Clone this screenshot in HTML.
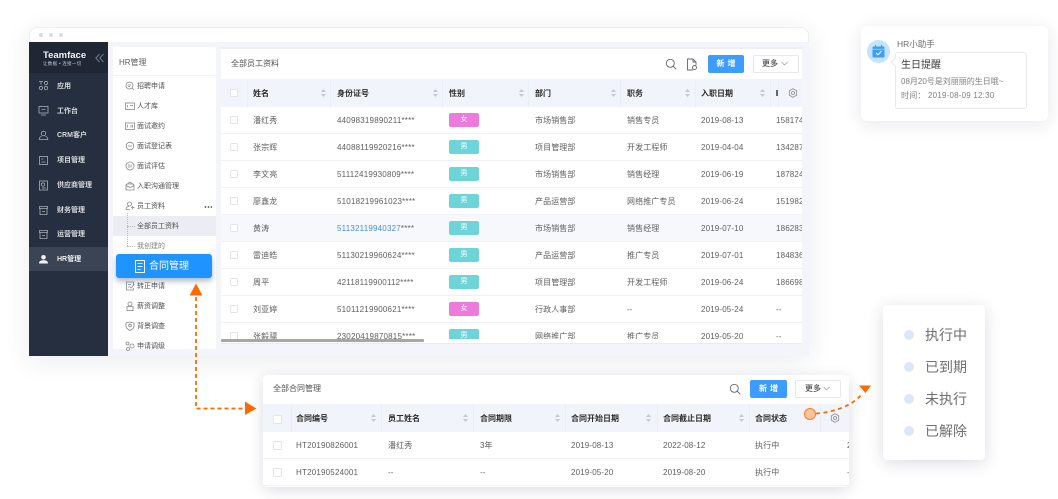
<!DOCTYPE html>
<html lang="zh">
<head>
<meta charset="utf-8">
<title>Teamface HR</title>
<style>
html,body{margin:0;padding:0;background:#fff;}
body{width:1058px;height:499px;position:relative;overflow:hidden;font-family:"Liberation Sans","Noto Sans CJK SC",sans-serif;font-size:8px;color:#5f5f5f;filter:blur(.3px);}
div,span,svg{position:absolute;display:block;box-sizing:border-box;white-space:nowrap;}
b{font-weight:500}
.win{left:29px;top:27px;width:780px;height:329px;background:#f3f5fb;border-radius:8px 8px 0 0;box-shadow:0 5px 26px rgba(30,40,70,.09);}
.titlebar{left:0;top:0;width:780px;height:15px;background:#fff;border-radius:8px 8px 0 0;border:1px solid #eceef2;border-bottom:0;}
.dot{width:4px;height:4px;border-radius:50%;background:#dcdcdc;top:6px;}
.side{left:29px;top:42px;width:79px;height:314px;background:#252f3f;}
.logo{left:29px;top:42px;width:79px;height:31px;background:#1f2735;}
.si{left:57px;font-size:7px;line-height:12px;height:10px;color:#d5d8dc;font-weight:700;}
.sic{left:38px;width:11px;height:11px;fill:none;stroke:#aab0b8;stroke-width:.8;}
.sub{left:113px;top:47px;width:103px;height:302px;background:#fff;}
.mi{left:137px;font-size:7px;line-height:12px;height:10px;color:#4f4f4f;}
.mic{left:125px;width:10px;height:10px;fill:none;stroke:#888;stroke-width:.8;}
.main{left:221px;top:49px;width:581px;height:295px;background:#fff;border-top:0;border-bottom:1px solid #e8ebf1;}
.band{left:221px;top:47px;width:581px;height:2px;background:#eceef4;}
.tbl{left:221px;top:79px;width:581px;height:260px;overflow:hidden;}
.hd{left:0;top:0;width:581px;height:28px;background:#f1f4fb;}
.ht{top:0;line-height:29px;font-size:8px;color:#2c2c2c;font-weight:700;}
.sep{top:0;width:1px;height:28px;background:#e9edf5;}
.r{left:0;width:581px;height:27px;border-bottom:1px solid #eff1f5;background:#fff;}
.r span{top:0;line-height:27px;color:#5f5f5f;letter-spacing:.1px;}
.cb{width:8px;height:8px;border:1px solid #e3e5ea;border-radius:1px;background:#fff;}
.r .cb{left:9px;top:9px;}
.c1{left:32px}.c2{left:116px;letter-spacing:.2px!important}.c4{left:314px}.c5{left:406px}.c6{left:480px;letter-spacing:.15px!important}.c7{left:555px;letter-spacing:.15px!important}
.r .tag{left:228px;top:6px;width:30px;height:14px;border-radius:2px;color:#fff;text-align:center;line-height:14px;font-size:7px;}
.m{background:#6dd5d8}.f{background:#ec7bdc}
.sort{width:5px;height:8px;top:10px;fill:#c4c8d0;}
.btn{background:#3d9cff;color:#fff;border-radius:2px;text-align:center;font-size:8px;font-weight:700;letter-spacing:3px;text-indent:3px;}
.more{background:#fff;border:1px solid #e8e8ea;border-radius:2px;color:#4f4f4f;font-size:8px;font-weight:500;}
.ctr{left:263px;top:375px;width:586px;height:112px;background:#fff;border-radius:4px;box-shadow:0 3px 14px rgba(30,40,70,.16);overflow:hidden;}
.ctr .hd{top:29px;width:586px;}
.ctr .r{width:586px;}
.ctr .r .cb{left:10px;top:9px;}
.ctr .cb{width:9px;height:9px;}
.ctr .ht{top:29px;}
.ctr .sep{top:29px;}
.ctr .sort{top:39px;}
.k1{left:33px;letter-spacing:.2px!important}.k2{left:125px}.k3{left:217px}.k4{left:308px;letter-spacing:.15px!important}.k5{left:400px;letter-spacing:.15px!important}.k6{left:492px}.k7{left:584px}
.st{left:883px;top:305px;width:102px;height:155px;background:#fff;border-radius:4px;box-shadow:0 3px 16px rgba(30,40,70,.16);}
.sd{left:904px;width:10px;height:10px;border-radius:50%;background:#dbe7fd;}
.stx{left:925px;font-size:14px;line-height:20px;height:20px;color:#6f6f6f;}
.pop{left:861px;top:26px;width:187px;height:95px;background:#fff;border-radius:6px;box-shadow:0 3px 18px rgba(30,40,70,.11);}
</style>
</head>
<body>

<div class="win"><div class="titlebar"></div>
<div class="dot" style="left:10px"></div><div class="dot" style="left:20px"></div><div class="dot" style="left:30px"></div></div>

<div class="side"></div>
<div class="logo"></div>
<div style="left:43px;top:50px;font-size:9.500px;line-height:11px;font-weight:700;color:#f2f3f5">Teamface</div>
<div style="left:43px;top:60px;font-size:4.500px;line-height:7px;color:#c6c9ce;letter-spacing:.3px">让数据 • 连接一切</div>
<svg style="left:95px;top:53px;width:9px;height:10px;fill:none;stroke:#8c93a0;stroke-width:.8" viewBox="0 0 9 10"><path d="M4.500 1L.8 5l3.700 4M8.500 1L4.800 5l3.700 4"/></svg>

<div style="left:29px;top:247px;width:79px;height:24px;background:#3a4454"></div>

<svg class="sic" style="top:80px" viewBox="0 0 11 11"><path d="M1 1.500h4M3 1.500v3"/><circle cx="8" cy="3" r="1.700"/><circle cx="3" cy="8" r="1.700"/><circle cx="8" cy="8" r="1.700"/></svg><div class="si" style="top:81px">应用</div>
<svg class="sic" style="top:105px" viewBox="0 0 11 11"><rect x="1" y="1.500" width="9" height="6.500"/><path d="M3 10h5M3.500 4.500h4"/></svg><div class="si" style="top:106px">工作台</div>
<svg class="sic" style="top:130px" viewBox="0 0 11 11"><circle cx="5.500" cy="3.500" r="2.300"/><path d="M1 9.500c.5-2 1.500-3 2.500-3M10 9.500c-.5-2-1.500-3-2.500-3M1 9.500h9"/></svg><div class="si" style="top:130px">CRM客户</div>
<svg class="sic" style="top:155px" viewBox="0 0 11 11"><rect x="1.500" y="1.500" width="8" height="8"/><path d="M3.500 4h2M3.500 7h4"/></svg><div class="si" style="top:155px">项目管理</div>
<svg class="sic" style="top:180px" viewBox="0 0 11 11"><rect x="1.500" y="1" width="8" height="9"/><circle cx="5" cy="4.500" r="1.700"/><path d="M4 8h4"/></svg><div class="si" style="top:180px">供应商管理</div>
<svg class="sic" style="top:205px" viewBox="0 0 11 11"><path d="M1.500 1.500h8v2h-8zM2 3.500v6h7v-6M4 6.500h3"/></svg><div class="si" style="top:205px">财务管理</div>
<svg class="sic" style="top:229px" viewBox="0 0 11 11"><path d="M1.500 1.500h8v2h-8zM2 3.500v6h7v-6M4 6.500h3"/></svg><div class="si" style="top:229px">运营管理</div>
<svg style="left:38px;top:254px;width:11px;height:11px;fill:#f2f3f5" viewBox="0 0 11 11"><circle cx="5.500" cy="3.300" r="2.300"/><path d="M1 9.500c0-2.500 2-3.200 4.500-3.200s4.500.7 4.500 3.200z"/></svg><div class="si" style="top:254px;color:#eef0f2">HR管理</div>

<div class="sub"></div>
<div style="left:113px;top:75px;width:103px;height:1px;background:#f0f1f5"></div>
<div style="left:119px;top:57px;font-size:8px;line-height:12px;color:#5f5f5f">HR管理</div>

<svg class="mic" style="top:81px" viewBox="0 0 10 10"><circle cx="4.500" cy="4.500" r="3.500"/><path d="M7 7l2 2M3 4h3M3 5.500h2"/></svg><div class="mi" style="top:81px">招聘申请</div>
<svg class="mic" style="top:101px" viewBox="0 0 10 10"><rect x=".5" y="2" width="9" height="6.500"/><path d="M2.500 4v2.500M5 4.500h3"/></svg><div class="mi" style="top:101px">人才库</div>
<svg class="mic" style="top:121px" viewBox="0 0 10 10"><rect x=".5" y="2" width="9" height="6.500"/><path d="M2.500 4v2.500M6 4v2.500M7.500 4v2.500"/></svg><div class="mi" style="top:121px">面试邀约</div>
<svg class="mic" style="top:141px" viewBox="0 0 10 10"><circle cx="5" cy="5" r="3.800"/><path d="M3 5h4"/></svg><div class="mi" style="top:141px">面试登记表</div>
<svg class="mic" style="top:161px" viewBox="0 0 10 10"><circle cx="5" cy="5" r="4"/><path d="M4 3v4M6 3.500v3"/></svg><div class="mi" style="top:161px">面试评估</div>
<svg class="mic" style="top:181px" viewBox="0 0 10 10"><path d="M1 4l4-3 4 3v5H1zM1 4.500l4 2 4-2M3 3h4"/></svg><div class="mi" style="top:181px">入职沟通管理</div>
<svg class="mic" style="top:201px" viewBox="0 0 10 10"><circle cx="4.500" cy="3" r="2"/><path d="M1 8.500c0-2 1.500-3.200 3-3.200M1 8.500h4M6 6.500h3.500M7.500 5v3.500"/></svg><div class="mi" style="top:201px">员工资料</div>
<div style="left:204px;top:205.500px;width:8px;height:2px;background-image:radial-gradient(circle,#777 .9px,transparent 1px);background-size:3px 2px"></div>

<div style="left:113px;top:216px;width:103px;height:20px;background:#ecedf2"></div>
<div style="left:127px;top:213px;width:0;height:33px;border-left:1px dotted #bbb"></div>
<div style="left:127px;top:226px;width:8px;height:0;border-top:1px dotted #bbb"></div>
<div style="left:127px;top:246px;width:8px;height:0;border-top:1px dotted #bbb"></div>
<div class="mi" style="top:221px">全部员工资料</div>
<div class="mi" style="top:241px;color:#808080">我创建的</div>

<svg class="mic" style="top:281px" viewBox="0 0 10 10"><path d="M8.500 4V1h-7v8h7V7M3 3.500h3M3 6h1M4.500 5.500l1.500 1.500 3.500-4"/></svg><div class="mi" style="top:281px">转正申请</div>
<svg class="mic" style="top:301px" viewBox="0 0 10 10"><circle cx="5" cy="3" r="2"/><rect x="2" y="5.500" width="6" height="4"/></svg><div class="mi" style="top:301px">薪资调整</div>
<svg class="mic" style="top:321px" viewBox="0 0 10 10"><path d="M1 2l4-1 4 1v3c0 2-2 3.500-4 4.500C3 8.500 1 7 1 5z"/><circle cx="5" cy="4.500" r="1.300"/></svg><div class="mi" style="top:321px">背景调查</div>
<svg class="mic" style="top:341px" viewBox="0 0 10 10"><circle cx="2.500" cy="2.500" r="1.500"/><circle cx="7" cy="5" r="2"/><circle cx="3" cy="8" r="1.500"/></svg><div class="mi" style="top:341px">申请调级</div>

<div class="band"></div>
<div class="main"></div>
<div style="left:231px;top:58px;font-size:8px;line-height:12px;color:#4f4f4f">全部员工资料</div>
<svg style="left:665px;top:58px;width:12px;height:12px;fill:none;stroke:#666;stroke-width:.9" viewBox="0 0 12 12"><circle cx="5.300" cy="5.300" r="4"/><path d="M8.300 8.300l3 3"/></svg>
<svg style="left:686px;top:58px;width:12px;height:13px;fill:none;stroke:#666;stroke-width:.9" viewBox="0 0 12 13"><path d="M7 12H1.500V1H7l3 3v3M7 1v3h3"/><circle cx="8.500" cy="9.500" r="2"/></svg>
<div class="btn" style="left:708px;top:55px;width:36px;height:18px;line-height:18px">新增</div>
<div class="more" style="left:753px;top:55px;width:46px;height:18px;line-height:16px;padding-left:8px">更多</div>
<svg style="left:781px;top:61px;width:7px;height:5px;fill:none;stroke:#999;stroke-width:.7" viewBox="0 0 7 5"><path d="M.5 1l3 3 3-3"/></svg>

<div class="tbl">
 <div class="hd"></div>
 <div class="cb" style="left:9px;top:10px"></div>
 <div class="sep" style="left:26px"></div><div class="sep" style="left:109px"></div><div class="sep" style="left:221px"></div><div class="sep" style="left:307px"></div><div class="sep" style="left:399px"></div><div class="sep" style="left:474px"></div><div class="sep" style="left:549px"></div><div class="sep" style="left:557px"></div>
 <div class="ht" style="left:32px">姓名</div><div class="ht" style="left:116px">身份证号</div><div class="ht" style="left:228px">性别</div><div class="ht" style="left:314px">部门</div><div class="ht" style="left:406px">职务</div><div class="ht" style="left:480px">入职日期</div>
 <svg class="sort" style="left:100px" viewBox="0 0 5 8"><path d="M2.500 0L5 3H0zM2.500 8L0 5h5z"/></svg>
 <svg class="sort" style="left:212px" viewBox="0 0 5 8"><path d="M2.500 0L5 3H0zM2.500 8L0 5h5z"/></svg>
 <svg class="sort" style="left:298px" viewBox="0 0 5 8"><path d="M2.500 0L5 3H0zM2.500 8L0 5h5z"/></svg>
 <svg class="sort" style="left:390px" viewBox="0 0 5 8"><path d="M2.500 0L5 3H0zM2.500 8L0 5h5z"/></svg>
 <svg class="sort" style="left:464px" viewBox="0 0 5 8"><path d="M2.500 0L5 3H0zM2.500 8L0 5h5z"/></svg>
 <svg class="sort" style="left:539px" viewBox="0 0 5 8"><path d="M2.500 0L5 3H0zM2.500 8L0 5h5z"/></svg>
 <div style="left:555px;top:11px;width:2px;height:6px;background:#666"></div>
 <svg style="left:567px;top:9px;width:10px;height:10px;fill:none;stroke:#888;stroke-width:.8" viewBox="0 0 10 10"><path d="M5 .7l3.700 2.150v4.300L5 9.300 1.300 7.150v-4.300z"/><circle cx="5" cy="5" r="1.500"/></svg>

 <div class="r" style="top:28px"><span class="cb"></span><span class="c1">潘红秀</span><span class="c2">44098319890211****</span><span class="tag f">女</span><span class="c4">市场销售部</span><span class="c5">销售专员</span><span class="c6">2019-08-13</span><span class="c7">158174</span></div>
 <div class="r" style="top:55px"><span class="cb"></span><span class="c1">张宗辉</span><span class="c2">44088119920216****</span><span class="tag m">男</span><span class="c4">项目管理部</span><span class="c5">开发工程师</span><span class="c6">2019-04-04</span><span class="c7">134287</span></div>
 <div class="r" style="top:82px"><span class="cb"></span><span class="c1">李文亮</span><span class="c2">51112419930809****</span><span class="tag m">男</span><span class="c4">市场销售部</span><span class="c5">销售经理</span><span class="c6">2019-06-19</span><span class="c7">187824</span></div>
 <div class="r" style="top:109px"><span class="cb"></span><span class="c1">廖鑫龙</span><span class="c2">51018219961023****</span><span class="tag m">男</span><span class="c4">产品运营部</span><span class="c5">网络推广专员</span><span class="c6">2019-06-24</span><span class="c7">151982</span></div>
 <div class="r" style="top:136px;background:#f6f8fc"><span class="cb"></span><span class="c1">黄涛</span><span class="c2" style="color:#4a8ee0">51132119940327<i style="font-style:normal;color:#5f5f5f">****</i></span><span class="tag m">男</span><span class="c4">市场销售部</span><span class="c5">销售经理</span><span class="c6">2019-07-10</span><span class="c7">186283</span></div>
 <div class="r" style="top:163px"><span class="cb"></span><span class="c1">雷迪皓</span><span class="c2">51130219960624****</span><span class="tag m">男</span><span class="c4">产品运营部</span><span class="c5">推广专员</span><span class="c6">2019-07-01</span><span class="c7">184836</span></div>
 <div class="r" style="top:190px"><span class="cb"></span><span class="c1">周平</span><span class="c2">42118119900112****</span><span class="tag m">男</span><span class="c4">项目管理部</span><span class="c5">开发工程师</span><span class="c6">2019-06-24</span><span class="c7">186698</span></div>
 <div class="r" style="top:217px"><span class="cb"></span><span class="c1">刘亚婷</span><span class="c2">51011219900621****</span><span class="tag f">女</span><span class="c4">行政人事部</span><span class="c5">--</span><span class="c6">2019-05-24</span><span class="c7">--</span></div>
 <div class="r" style="top:244px"><span class="cb"></span><span class="c1">张毅骠</span><span class="c2">23020419870815****</span><span class="tag m">男</span><span class="c4">网络推广部</span><span class="c5">推广专员</span><span class="c6">2019-05-20</span><span class="c7">--</span></div>
</div>
<div style="left:221px;top:339px;width:203px;height:3px;background:#a6a6a6;border-radius:1px"></div>

<div style="left:116px;top:254px;width:96px;height:24px;background:#1f93ff;border-radius:3px;box-shadow:0 3px 6px rgba(20,50,90,.35)"></div>
<svg style="left:135px;top:260px;width:10px;height:13px;fill:none;stroke:#fff;stroke-width:.9" viewBox="0 0 10 13"><path d="M.5.500h9v12h-9zM2.500 3.500h5M2.500 6.500h5M2.500 9.500h3"/></svg>
<div style="left:149px;top:260px;font-size:10px;line-height:14px;color:#fff">合同管理</div>

<div class="ctr">
 <div style="left:10px;top:8px;font-size:8px;line-height:12px;color:#4f4f4f">全部合同管理</div>
 <svg style="left:466px;top:8px;width:12px;height:12px;fill:none;stroke:#666;stroke-width:.9" viewBox="0 0 12 12"><circle cx="5.300" cy="5.300" r="4"/><path d="M8.300 8.300l3 3"/></svg>
 <div class="btn" style="left:487px;top:5px;width:37px;height:18px;line-height:18px">新增</div>
 <div class="more" style="left:532px;top:5px;width:46px;height:18px;line-height:16px;padding-left:9px">更多</div>
 <svg style="left:560px;top:11px;width:7px;height:5px;fill:none;stroke:#999;stroke-width:.7" viewBox="0 0 7 5"><path d="M.5 1l3 3 3-3"/></svg>
 <div class="hd"></div>
 <div class="cb" style="left:10px;top:40px"></div>
 <div class="sep" style="left:28px"></div><div class="sep" style="left:118px"></div><div class="sep" style="left:210px"></div><div class="sep" style="left:302px"></div><div class="sep" style="left:394px"></div><div class="sep" style="left:486px"></div><div class="sep" style="left:557px"></div>
 <div class="ht" style="left:33px">合同编号</div><div class="ht" style="left:125px">员工姓名</div><div class="ht" style="left:217px">合同期限</div><div class="ht" style="left:308px">合同开始日期</div><div class="ht" style="left:400px">合同截止日期</div><div class="ht" style="left:492px">合同状态</div>
 <svg class="sort" style="left:108px" viewBox="0 0 5 8"><path d="M2.500 0L5 3H0zM2.500 8L0 5h5z"/></svg>
 <svg class="sort" style="left:200px" viewBox="0 0 5 8"><path d="M2.500 0L5 3H0zM2.500 8L0 5h5z"/></svg>
 <svg class="sort" style="left:292px" viewBox="0 0 5 8"><path d="M2.500 0L5 3H0zM2.500 8L0 5h5z"/></svg>
 <svg class="sort" style="left:383px" viewBox="0 0 5 8"><path d="M2.500 0L5 3H0zM2.500 8L0 5h5z"/></svg>
 <svg class="sort" style="left:476px" viewBox="0 0 5 8"><path d="M2.500 0L5 3H0zM2.500 8L0 5h5z"/></svg>
 <svg style="left:567px;top:38px;width:10px;height:10px;fill:none;stroke:#888;stroke-width:.8" viewBox="0 0 10 10"><path d="M5 .7l3.700 2.150v4.300L5 9.300 1.300 7.150v-4.300z"/><circle cx="5" cy="5" r="1.500"/></svg>
 <div class="r" style="top:57px"><span class="cb"></span><span class="k1">HT20190826001</span><span class="k2">潘红秀</span><span class="k3">3年</span><span class="k4">2019-08-13</span><span class="k5">2022-08-12</span><span class="k6">执行中</span><span class="k7">2</span></div>
 <div class="r" style="top:84px"><span class="cb"></span><span class="k1">HT20190524001</span><span class="k2">--</span><span class="k3">--</span><span class="k4">2019-05-20</span><span class="k5">2019-08-20</span><span class="k6">执行中</span><span class="k7">-</span></div>
</div>

<svg style="left:0;top:0;width:1058px;height:499px;fill:none;overflow:visible">
 <path d="M196 297V408.500H243" stroke="#ff6a00" stroke-width="1.800" stroke-dasharray="4 3"/>
 <path d="M196 283.500L202.500 295.500H189.500z" fill="#ff6a00"/>
 <path d="M245 401.500L256.500 408.500 245 415z" fill="#ff6a00"/>
 <path d="M816 413.500C836 412 853 405 862 394" stroke="#ff6a00" stroke-width="1.800" stroke-dasharray="4 3.500"/>
 <path d="M859 385.500H871L865.500 393z" fill="#ff6a00"/>
 <circle cx="810" cy="414" r="5.500" fill="#f9c6a0" stroke="#ff7a1a" stroke-width="1"/>
</svg>

<div class="st"></div>
<div class="sd" style="top:330px"></div><div class="stx" style="top:325px">执行中</div>
<div class="sd" style="top:362px"></div><div class="stx" style="top:357px">已到期</div>
<div class="sd" style="top:394px"></div><div class="stx" style="top:389px">未执行</div>
<div class="sd" style="top:426px"></div><div class="stx" style="top:421px">已解除</div>

<div class="pop"></div>
<div style="left:867px;top:40px;width:23px;height:23px;border-radius:50%;background:#c4e3fc"></div>
<svg style="left:872px;top:45px;width:13px;height:13px" viewBox="0 0 13 13"><rect x=".5" y="1.500" width="12" height="11" rx="1" fill="#3c9ef5"/><path d="M3.500 0v3M9.500 0v3" stroke="#3c9ef5" stroke-width="1.200"/><path d="M.5 4.200h12" stroke="#c4e3fc" stroke-width=".6"/><path d="M4 8l2 1.800L9.500 6" stroke="#fff" fill="none" stroke-width="1"/></svg>
<div style="left:897px;top:38px;font-size:8.500px;line-height:12px;color:#6f6f6f">HR小助手</div>
<div style="left:895px;top:52px;width:132px;height:57px;background:#fff;border:1px solid #e8e9ed;border-radius:3px"></div>
<div style="left:892px;top:59px;width:6px;height:6px;background:#fff;transform:rotate(45deg);border-left:1px solid #e8e9ed;border-bottom:1px solid #e8e9ed"></div>
<div style="left:901px;top:59px;font-size:10px;line-height:14px;color:#3c3c3c">生日提醒</div>
<div style="left:901px;top:76px;font-size:8px;line-height:11px;color:#808080">08月20号是刘丽丽的生日哦~</div>
<div style="left:901px;top:90px;font-size:8px;line-height:11px;color:#808080;letter-spacing:.2px">时间： 2019-08-09 12:30</div>

</body>
</html>
